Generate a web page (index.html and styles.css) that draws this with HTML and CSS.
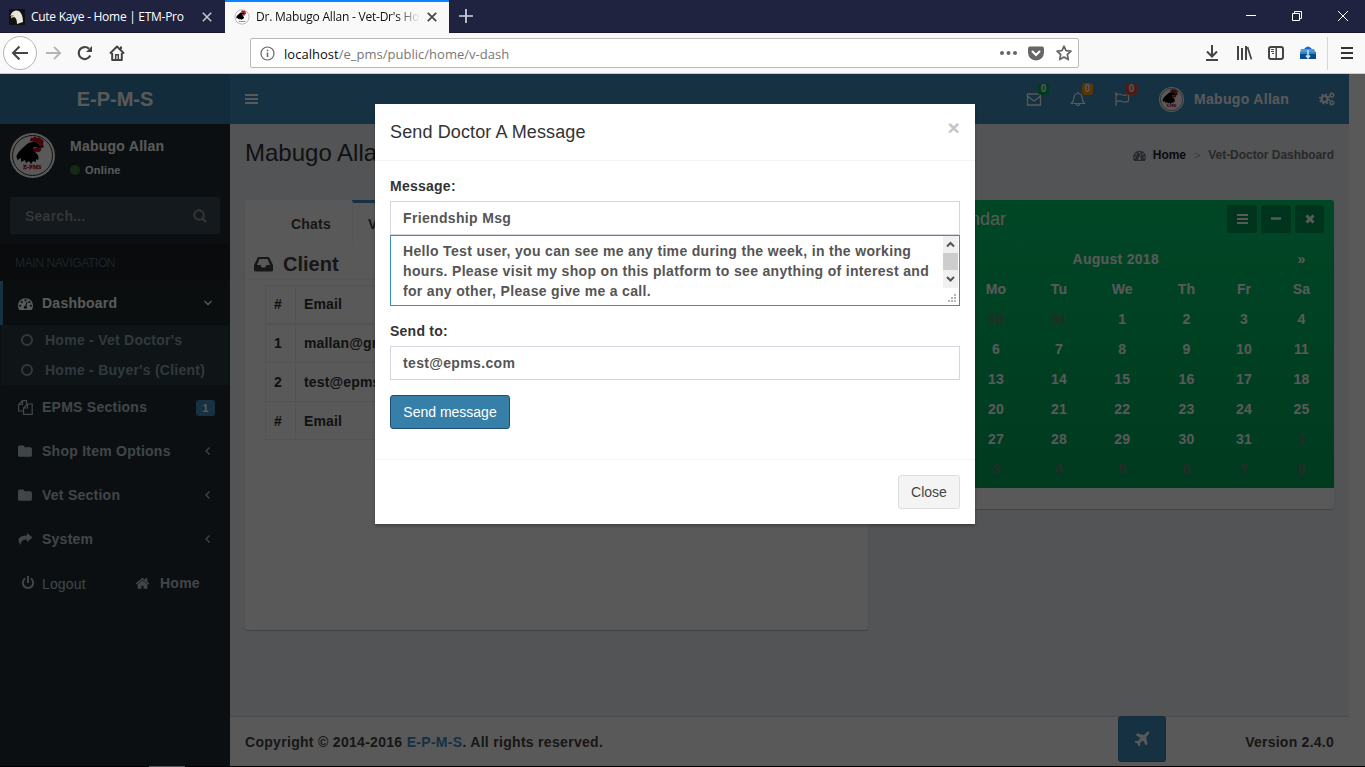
FILE: index.html
```html
<!DOCTYPE html>
<html lang="en">
<head>
<meta charset="utf-8">
<title>Dr. Mabugo Allan - Vet-Dr's Home</title>
<link rel="stylesheet" href="styles.css">
</head>
<body>
<svg class="defs" width="0" height="0">
  <symbol id="gauge" viewBox="0 0 1792 1792"><path fill="currentColor" d="M384 1152q0-53-37.500-90.500t-90.500-37.500-90.500 37.500-37.500 90.500 37.500 90.500 90.500 37.500 90.500-37.500 37.500-90.500zm192-448q0-53-37.500-90.500t-90.500-37.500-90.500 37.500-37.500 90.500 37.500 90.500 90.500 37.500 90.500-37.500 37.500-90.500zm428 481l101-382q6-26-7.500-48.500t-38.500-29.500-48 6.500-30 39.500l-101 382q-60 5-107 43.500t-63 98.500q-20 77 20 146t117 89 146-20 89-117q16-60-6-117t-72-91zm660-33q0-53-37.500-90.500t-90.500-37.500-90.500 37.500-37.500 90.500 37.500 90.500 90.500 37.500 90.500-37.500 37.500-90.500zm-640-640q0-53-37.500-90.500t-90.500-37.500-90.500 37.500-37.500 90.500 37.500 90.500 90.500 37.500 90.500-37.500 37.500-90.500zm448 192q0-53-37.500-90.500t-90.500-37.500-90.500 37.500-37.500 90.500 37.500 90.500 90.500 37.500 90.500-37.500 37.500-90.500zm320 448q0 261-141 483-19 29-54 29h-1402q-35 0-54-29-141-221-141-483 0-182 71-348t191-286 286-191 348-71 348 71 286 191 191 286 71 348z"/></symbol>
  <symbol id="house" viewBox="0 0 1792 1792"><path fill="currentColor" d="M1472 992v480q0 26-19 45t-45 19h-384v-384h-256v384h-384q-26 0-45-19t-19-45v-480q0-1 .5-3t.5-3l575-474 575 474q1 2 1 6zm223-69l-62 74q-8 9-21 11h-3q-13 0-21-7l-692-577-692 577q-12 8-24 7-13-2-21-11l-62-74q-8-10-7-23.500t11-21.500l719-599q32-26 76-26t76 26l244 204v-195q0-14 9-23t23-9h192q14 0 23 9t9 23v408l219 182q10 8 11 21.500t-7 23.500z"/></symbol>
  <symbol id="search" viewBox="0 0 14 14"><g fill="none" stroke="currentColor" stroke-width="2"><circle cx="6" cy="6" r="4.700"/><path d="M9.500 9.500 13 13" stroke-width="2.300"/></g></symbol>
  <symbol id="folder" viewBox="0 0 14 12"><path fill="currentColor" d="M0 2Q0 .5 1.500.5H4.500Q6 .5 6 2H11.600Q13 2 13 3.500V9.500Q13 11 11.500 11H1.500Q0 11 0 9.500Z"/></symbol>
  <symbol id="menu" viewBox="0 0 14 12"><path stroke="currentColor" stroke-width="2" d="M0 2H13M0 6H13M0 10H13"/></symbol>
  <symbol id="left" viewBox="0 0 8 10"><path fill="none" stroke="currentColor" stroke-width="1.300" d="M5.500 1.500 2 5 5.500 8.500"/></symbol>
  <symbol id="rooster" viewBox="0 0 45 45">
    <circle cx="22.500" cy="22.500" r="22.500" fill="#fff"/><circle cx="22.500" cy="22.500" r="20" fill="none" stroke="#333" stroke-width="1"/>
    <path fill="#c1121f" d="M20 8q0-4 3-3 2-3 4 0 3-2 4 1 4 1 2 5 2 3-1 4l-4-5zM24 15l7 0q1 4-3 4-4 0-5-2z"/>
    <path fill="#000" d="M6 25q1-6 9-12 3-4 9-4 4 0 6 4l4 1-5 1-5-1q-2 2 1 5 5 4 3 8l-2-1 0 3-3-1-2 3-2-3-3 2-1-3-4 2 0-4-4 2 0-3z"/>
    <text x="22.500" y="36" text-anchor="middle" class="crest">E-PMS</text>
  </symbol>
</svg>

<header class="tabstrip">
  <div class="tab tab-idle">
    <svg width="16" height="16"><rect width="16" height="16" fill="#111"/><path fill="#e8e4dc" d="M2 5Q5 0 10 2 14 5 14 13L8 15Q8 9 5 8L2 9Z"/><path fill="#b39a62" d="M1 6 5 6 3 9Z"/></svg>
    <span class="tab-label">Cute Kaye - Home | ETM-Pro</span>
    <svg class="tab-x" width="10" height="10"><path stroke="#c8c8d0" stroke-width="1.500" d="M.8.8 9.200 9.200M9.200.8.8 9.200"/></svg>
  </div>
  <div class="tab tab-active">
    <svg width="16" height="16"><use href="#rooster"/></svg>
    <span class="tab-label fade">Dr. Mabugo Allan - Vet-Dr's Home</span>
    <svg class="tab-x" width="10" height="10"><path stroke="#444" stroke-width="1.700" d="M.8.8 9.200 9.200M9.200.8.8 9.200"/></svg>
  </div>
  <svg class="plus" width="14" height="14"><path stroke="#d5d5df" stroke-width="1.700" d="M7 0V14M0 7H14"/></svg>
  <div class="window-buttons">
    <svg width="10" height="10"><path stroke="#fff" d="M0 4.500H10"/></svg>
    <svg width="10" height="10"><path fill="none" stroke="#fff" d="M.5 2.500H7.500V9.500H.5ZM2.500 2.500V.5H9.500V7.500H7.500"/></svg>
    <svg width="10" height="10"><path stroke="#fff" d="M0 0 10 10M10 0 0 10"/></svg>
  </div>
</header>

<nav class="toolbar">
  <div class="back"><svg width="18" height="16" viewBox="0 0 18 16"><path fill="none" stroke="#444" stroke-width="2" d="M17 8H2M8.500 1.500 2 8 8.500 14.500"/></svg></div>
  <svg class="forward" width="17" height="16" viewBox="0 0 18 16"><path fill="none" stroke="#b5b5b7" stroke-width="2" d="M1 8H16M9.500 1.500 16 8 9.500 14.500"/></svg>
  <svg class="reload" width="16" height="16"><path fill="none" stroke="#444" stroke-width="2.200" d="M13.200 10.500A6 6 0 1 1 12 3.800"/><path fill="#444" d="M15 1V7H9Z"/></svg>
  <svg class="home" width="16" height="16"><path fill="none" stroke="#444" stroke-width="2" stroke-linejoin="round" d="M1 8.500 8 1.500 15 8.500M3.200 8V15H12.800V8M12 4V1.500"/><path fill="none" stroke="#444" stroke-width="1.500" d="M6.700 15V9.700H9.300V15"/></svg>
  <div class="urlbar">
    <svg width="15" height="15"><circle cx="7.500" cy="7.500" r="6.500" fill="none" stroke="#666" stroke-width="1.200"/><path stroke="#666" stroke-width="1.500" d="M7.500 6.500V11M7.500 3.700V5.300"/></svg>
    <span class="url"><b>localhost</b>/e_pms/public/home/v-dash</span>
    <svg class="dots" width="17" height="4"><g fill="#666"><circle cx="2" cy="2" r="2"/><circle cx="8.500" cy="2" r="2"/><circle cx="15" cy="2" r="2"/></g></svg>
    <svg class="pocket" width="16" height="15"><path fill="#666" d="M2 .5H14Q16 .5 16 2.500V6.500Q15.500 14 8 14.500.5 14 0 6.500V2.500Q0 .5 2 .5"/><path fill="none" stroke="#fff" stroke-width="2" stroke-linecap="round" d="M4.500 5.500 8 9 11.500 5.500"/></svg>
    <svg class="star" width="16" height="16"><path fill="none" stroke="#666" stroke-width="1.700" stroke-linejoin="round" d="M8 1.200 10 5.700 15 6.200 11.300 9.500 12.300 14.600 8 12 3.700 14.600 4.700 9.500 1 6.200 6 5.700Z"/></svg>
  </div>
  <div class="tools">
    <svg width="14" height="16"><path fill="none" stroke="#444" stroke-width="2" d="M7 0V11M2 6.500 7 11.500 12 6.500M1 15H13"/></svg>
    <svg width="16" height="16"><path stroke="#444" stroke-width="2" d="M2 1V15M6 3V15M10 1V15" /><path stroke="#444" stroke-width="1.700" d="M11.500 2 15.500 14.500"/></svg>
    <svg width="16" height="14"><rect x="1" y="1" width="14" height="12" rx="2" fill="none" stroke="#444" stroke-width="2"/><path stroke="#444" stroke-width="1.500" d="M8.200 1V13"/><path stroke="#444" d="M3 3.500H6M3 5.500H6M4 7.500H6"/></svg>
    <svg width="16" height="16"><path fill="#4a9bd8" d="M1 4H14L16 8H0Z"/><path fill="#1b62d8" d="M4 4Q8-1 12 4Z"/><path fill="#0c4a86" d="M0 7H16V14H0Z"/><path fill="#2f86c6" d="M0 7H16V9H0Z"/><path fill="none" stroke="#bfe2fa" stroke-width="1.600" d="M8 5V13M6 10.500 8 13 10 10.500"/></svg>
    <i class="rule"></i>
    <svg width="12" height="12"><path stroke="#333" stroke-width="2" d="M0 1H12M0 6H12M0 11H12"/></svg>
  </div>
</nav>

<div class="viewport">
  <div class="app">
    <header class="topbar">
      <div class="brand">E-P-M-S</div>
      <div class="topnav">
        <svg class="burger" width="14" height="12"><use href="#menu"/></svg>
        <div class="alerts">
          <div class="alert"><svg width="16" height="16" viewBox="0 0 16 16"><path fill="none" stroke="#fff" stroke-width="1.300" d="M1.500 3H14.500V14H1.500ZM1.500 5Q5 8 8 10 11 8 14.500 5"/></svg><b class="count green">0</b></div>
          <div class="alert"><svg width="16" height="16" viewBox="0 0 16 16"><path fill="none" stroke="#fff" stroke-width="1.200" d="M1.500 12.500Q4 10 4 6 4.500 2.500 8 2.500 11.500 2.500 12 6 12 10 14.500 12.500ZM6 13Q8 16.500 10 13M8 1V3"/></svg><b class="count orange">0</b></div>
          <div class="alert"><svg width="16" height="16" viewBox="0 0 16 16"><path fill="none" stroke="#fff" stroke-width="1.200" d="M2 2V15M2.500 4Q5 2 8.500 4 11 5 14.500 3V10Q11 12 8.500 10.500 5 9 2.500 11M.8 2H3"/></svg><b class="count red">0</b></div>
        </div>
        <svg class="me" width="25" height="25"><use href="#rooster"/></svg>
        <span class="me-name">Mabugo Allan</span>
        <svg class="cogs" width="16" height="14" viewBox="0 0 16 14"><g fill="none" stroke="#fff"><circle cx="5.500" cy="7" r="3" stroke-width="2.200"/><circle cx="5.500" cy="7" r="4.700" stroke-width="1.700" stroke-dasharray="1.850 1.850"/><circle cx="12.800" cy="3.200" r="1.700" stroke-width="1.400"/><circle cx="12.800" cy="3.200" r="2.600" stroke-dasharray="1 1"/><circle cx="12.800" cy="10.800" r="1.700" stroke-width="1.400"/><circle cx="12.800" cy="10.800" r="2.600" stroke-dasharray="1 1"/></g></svg>
      </div>
    </header>
    <div class="columns">
      <aside class="sidebar">
        <div class="user">
          <svg width="45" height="45"><use href="#rooster"/></svg>
          <div><p class="user-name">Mabugo Allan</p><p class="status"><i></i>Online</p></div>
        </div>
        <div class="search"><span>Search...</span><svg width="14" height="14"><use href="#search"/></svg></div>
        <div class="nav-title">MAIN NAVIGATION</div>
        <div class="item current"><svg width="15" height="15"><use href="#gauge"/></svg><span>Dashboard</span><svg class="chev" width="10" height="8"><path fill="none" stroke="#fff" stroke-width="1.300" d="M1.500 2 5 5.500 8.500 2"/></svg></div>
        <div class="submenu">
          <div class="subitem"><i></i>Home - Vet Doctor's</div>
          <div class="subitem"><i></i>Home - Buyer's (Client)</div>
        </div>
        <div class="item"><svg width="15" height="15" viewBox="0 0 15 15"><path fill="none" stroke="currentColor" stroke-width="1.200" d="M5.500 11H.6V4.500L4.500.6H8.500V4M4.500.6V4.500H.6M5.500 8 9.500 4H14.200V14.400H5.500ZM9.500 4V8H5.500"/></svg><span>EPMS Sections</span><b class="badge">1</b></div>
        <div class="item"><svg width="15" height="13"><use href="#folder"/></svg><span>Shop Item Options</span><svg class="chev" width="8" height="10"><use href="#left"/></svg></div>
        <div class="item"><svg width="15" height="13"><use href="#folder"/></svg><span>Vet Section</span><svg class="chev" width="8" height="10"><use href="#left"/></svg></div>
        <div class="item"><svg width="15" height="14"><path fill="currentColor" d="M9 1 14.500 5.500 9 10V7.500Q3 7 2.500 13 0 10 .5 7 2 3.500 9 3.500Z"/></svg><span>System</span><svg class="chev" width="8" height="10"><use href="#left"/></svg></div>
        <div class="exits">
          <svg width="14" height="14"><path fill="none" stroke="currentColor" stroke-width="2" d="M4 2.500A5.200 5.200 0 1 0 10 2.500M7 0V7"/></svg><span class="logout">Logout</span>
          <svg width="15" height="15"><use href="#house"/></svg><b>Home</b>
        </div>
      </aside>
      <main class="main">
        <div class="content">
          <div class="page-head">
            <h1>Mabugo Allan</h1>
            <div class="crumbs"><svg width="13" height="13"><use href="#gauge"/></svg><b class="crumb-home">Home</b><span class="sep">&gt;</span><b>Vet-Doctor Dashboard</b></div>
          </div>
          <div class="cards">
            <section class="card">
              <div class="card-tabs"><span class="chats">Chats</span><span class="vets">Vet</span></div>
              <h2><svg width="19" height="16"><path fill="currentColor" fill-rule="evenodd" d="M4 1H15L19 9V14Q19 15.500 17.500 15.500H1.500Q0 15.500 0 14V9ZM5.500 3 3 9H6.500L7.800 11.500H11.200L12.500 9H16L13.500 3Z"/></svg>Client</h2>
              <table class="clients">
                <thead><tr><th>#</th><th>Email</th></tr></thead>
                <tbody><tr><td>1</td><td>mallan@gmail.com</td></tr><tr><td>2</td><td>test@epms.com</td></tr></tbody>
                <tfoot><tr><th>#</th><th>Email</th></tr></tfoot>
              </table>
            </section>
            <section class="calendar">
              <div class="cal-green">
                <div class="cal-head"><span>Calendar</span>
                  <div class="cal-buttons"><i class="w30"><svg width="11" height="10" viewBox="0 0 11 10"><path stroke="#fff" stroke-width="2" d="M0 1H11M0 5H11M0 9H11"/></svg></i><i class="w30"><svg width="10" height="10"><path stroke="#fff" stroke-width="2.500" d="M0 4.500H10"/></svg></i><i><svg width="10" height="10"><path stroke="#fff" stroke-width="3" d="M1.500 1.500 8.500 8.500M8.500 1.500 1.500 8.500"/></svg></i></div>
                </div>
                <div class="grid">
                  <b>«</b><b class="month">August 2018</b><b>»</b>
                  <b>Su</b><b>Mo</b><b>Tu</b><b>We</b><b>Th</b><b>Fr</b><b>Sa</b>
                  <b class="out">29</b><b class="out">30</b><b class="out">31</b><b>1</b><b>2</b><b>3</b><b>4</b>
                  <b>5</b><b>6</b><b>7</b><b>8</b><b>9</b><b>10</b><b>11</b>
                  <b>12</b><b>13</b><b>14</b><b>15</b><b>16</b><b>17</b><b>18</b>
                  <b>19</b><b>20</b><b>21</b><b>22</b><b>23</b><b>24</b><b>25</b>
                  <b>26</b><b>27</b><b>28</b><b>29</b><b>30</b><b>31</b><b class="out">1</b>
                  <b class="out">2</b><b class="out">3</b><b class="out">4</b><b class="out">5</b><b class="out">6</b><b class="out">7</b><b class="out">8</b>
                </div>
              </div>
            </section>
          </div>
        </div>
        <footer class="footer">
          <span class="copy">Copyright © 2014-2016 <a>E-P-M-S</a>. All rights reserved.</span>
          <div class="plane"><svg width="16" height="16" viewBox="0 0 16 16"><path fill="#fff" d="M15.300.7Q15.500 2.500 14.500 3.500L12 6 13.500 13 12 14.500 9 9.500 6 12 6.300 14.500 5 15.500 3.500 12.500.5 11 1.500 9.700 4 10 6.500 7 1.500 4 3 2.500 10 4 12.500 1.500Q14 .3 15.300.7"/></svg></div>
          <b class="version">Version 2.4.0</b>
        </footer>
      </main>
    </div>
  </div>
  <div class="backdrop"></div>
  <div class="modal">
    <div class="modal-head"><span>Send Doctor A Message</span><b>×</b></div>
    <div class="modal-body">
      <label>Message:</label>
      <div class="field">Friendship Msg</div>
      <div class="field area">
        <div class="area-text">Hello Test user, you can see me any time during the week, in the working<br>hours. Please visit my shop on this platform to see anything of interest and<br>for any other, Please give me a call.</div>
        <div class="area-side">
          <div class="scroll"><svg width="15" height="17"><path fill="none" stroke="#555" stroke-width="2" d="M4 10.500 7.500 7 11 10.500"/></svg><i></i><svg width="15" height="17"><path fill="none" stroke="#555" stroke-width="2" d="M4 7 7.500 10.500 11 7"/></svg></div>
          <svg width="15" height="16"><path fill="#b5b5b5" d="M11 6h2v2h-2zM11 9h2v2h-2zM8 9h2v2H8zM11 12h2v2h-2zM8 12h2v2H8zM5 12h2v2H5z"/></svg>
        </div>
      </div>
      <label class="to">Send to:</label>
      <div class="field">test@epms.com</div>
      <div class="send">Send message</div>
    </div>
    <div class="modal-foot"><div class="close">Close</div></div>
  </div>
</div>
<div class="taskbar"><i></i></div>
</body>
</html>
```

FILE: styles.css
```css
* { box-sizing: border-box; }
body { margin: 0; width: 1365px; height: 767px; overflow: hidden; display: flex; flex-direction: column; font: 14px/20px "Liberation Sans", Arial, sans-serif; color: #333; }
svg { display: block; flex: none; }
.defs { position: absolute; }
p, h1, h2 { margin: 0; }
i { display: block; font-style: normal; }
.crest { font: bold 5.500px "Liberation Serif", serif; fill: #c1121f; stroke: #c1121f; stroke-width: .3px; }

/* Browser window */
.tabstrip { height: 33px; flex: none; display: flex; align-items: center; background: #202340; border-bottom: 1px solid #15172c; font: 12px/16px "Open Sans", sans-serif; }
.tab { height: 33px; display: flex; align-items: center; padding-left: 9px; }
.tab-idle { width: 225px; color: #fff; padding-top: 2px; }
.tab-active { width: 224px; background: #f9f9fa; border-top: 2px solid #0a84ff; color: #111; }
.tab-label { width: 164px; margin-left: 6px; white-space: nowrap; overflow: hidden; letter-spacing: -.28px; }
.tab-idle .tab-x { margin-left: 7px; }
.tab-active .tab-x { margin-left: 7px; }
.fade { letter-spacing: -.22px; -webkit-mask-image: linear-gradient(90deg, #000 86%, transparent); mask-image: linear-gradient(90deg, #000 86%, transparent); }
.plus { margin-left: 10px; }
.window-buttons { margin-left: auto; display: flex; gap: 36px; padding-right: 17px; }
.toolbar { height: 41px; flex: none; display: flex; align-items: center; background: #f9f9fa; border-bottom: 1px solid #ccc; padding-left: 3px; }
.back { width: 34px; height: 34px; border: 1px solid #b5b5b5; border-radius: 50%; background: #fff; display: flex; align-items: center; justify-content: center; }
.forward { margin-left: 8px; }
.reload { margin-left: 15px; }
.home { margin-left: 16px; }
.urlbar { width: 829px; height: 30px; margin-left: 125px; background: #fff; border: 1px solid #bbb; border-radius: 2px; display: flex; align-items: center; padding-left: 9px; font: 13px/18px "Open Sans", sans-serif; color: #777; }
.url { margin-left: 9px; width: 716px; padding-top: 2px; letter-spacing: .02px; }
.url b { font-weight: 400; color: #0c0c0d; }
.pocket { margin-left: 11px; }
.star { margin-left: 12px; }
.tools { display: flex; align-items: center; margin-left: 126px; }
.tools svg + svg { margin-left: 16px; }
.tools svg:nth-child(2) { margin-left: 17px; }
.rule { width: 1px; height: 33px; background: #d5d5d7; margin-left: 11px; }
.rule + svg { margin-left: 13px; }

/* Dashboard */
.viewport { position: relative; height: 692px; flex: none; background: #fff; overflow: hidden; }
.app { width: 1349px; height: 692px; display: flex; flex-direction: column; }
.topbar { height: 50px; display: flex; flex: none; }
.brand { width: 230px; background: #367fa9; color: #fff; font: bold 20px/50px "Liberation Sans", sans-serif; text-align: center; }
.topnav { flex: 1; background: #3c8dbc; color: #fff; display: flex; align-items: center; padding-left: 15px; }
.alerts { display: flex; margin-left: 767px; }
.alert { position: relative; width: 44px; }
.count { position: absolute; left: 12px; top: -8px; width: 11px; height: 12px; border-radius: 3px; font: bold 10px/12px "Liberation Sans", sans-serif; text-align: center; }
.green { background: #00a65a; }
.orange { background: #f39c12; }
.red { background: #dd4b39; }
.me { margin-left: 1px; }
.me-name { margin-left: 10px; width: 125px; font-weight: 700; letter-spacing: .32px; }
.columns { flex: 1; display: flex; }
.sidebar { width: 230px; background: #222d32; color: #b8c7ce; font-weight: 700; letter-spacing: .25px; }
.user { height: 73px; display: flex; padding: 9px 10px; color: #fff; }
.user div { padding: 3px 0 0 15px; }
.status { display: flex; align-items: center; font-size: 11px; margin-top: 4px; }
.status i { width: 10px; height: 10px; border-radius: 50%; background: #3c763d; margin-right: 5px; }
.search { height: 37px; margin: 0 10px 10px; border-radius: 3px; background: #374850; color: #999; display: flex; align-items: center; justify-content: space-between; padding: 0 13px 0 15px; }
.nav-title { height: 37px; background: #1a2226; color: #4b646f; font: 12px/38px "Liberation Sans", sans-serif; letter-spacing: -.36px; padding-left: 15px; }
.item { height: 44px; display: flex; align-items: center; padding-left: 18px; }
.item span { margin-left: 9px; }
.chev { margin-left: auto; margin-right: 18px; }
.current { background: #1e282c; color: #fff; border-left: 3px solid #3c8dbc; padding-left: 15px; }
.current .chev { margin-right: 17px; }
.submenu { background: #2c3b41; margin: 0 1px; color: #8aa4af; height: 60px; }
.subitem { height: 30px; display: flex; align-items: center; padding-left: 20px; letter-spacing: .26px; }
.subitem i { width: 12px; height: 12px; border: 2px solid; border-radius: 50%; margin-right: 12px; }
.badge { margin-left: auto; margin-right: 15px; width: 19px; height: 16px; margin-top: 2px; border-radius: 3px; background: #3c8dbc; color: #fff; font-size: 10.500px; line-height: 16px; text-align: center; }
.exits { height: 44px; display: flex; align-items: center; padding-left: 21px; }
.logout { width: 93px; margin-left: 7px; padding-top: 1px; font-weight: 400; letter-spacing: .15px; }
.exits b { margin-left: 10px; }
.main { flex: 1; display: flex; flex-direction: column; background: #ecf0f5; }
.content { flex: 1; padding: 0 15px; }
.page-head { height: 76px; display: flex; justify-content: space-between; }
h1 { font: 24px/30px "Liberation Sans", sans-serif; padding-top: 14px; }
.crumbs { display: flex; align-items: center; height: 20px; margin-top: 21px; font-size: 12px; letter-spacing: -.05px; color: #777; }
.crumb-home { color: #222; margin-left: 7px; }
.sep { color: #aaa; margin: 0 8px; font-size: 11px; }
.cards { display: flex; gap: 30px; }
.card { width: 623px; height: 430px; background: #fff; border-radius: 3px; box-shadow: 0 1px 1px rgba(0,0,0,.2); font-weight: 700; }
.card-tabs { height: 44px; display: flex; line-height: 48px; color: #444; }
.chats { width: 107px; padding-left: 46px; letter-spacing: .2px; }
.vets { height: 44px; border-top: 3px solid #3c8dbc; border-left: 1px solid #f4f4f4; padding: 0 15px; line-height: 42px; }
h2 { height: 36px; display: flex; align-items: center; padding: 4px 0 0 9px; border-bottom: 1px solid #f4f4f4; font: bold 20px/22px "Liberation Sans", sans-serif; color: #444; }
h2 svg { margin-right: 10px; }
.clients { width: 583px; margin: 5px 0 0 20px; border-collapse: collapse; table-layout: fixed; }
.clients th, .clients td { border: 1px solid #eee; padding: 0 8px; height: 39px; text-align: left; letter-spacing: .15px; }
.clients th:first-child { width: 30px; }
.clients thead th { height: 38px; border-bottom-width: 2px; }
.clients tfoot th { height: 38px; }
.calendar { width: 436px; height: 309px; background: #fff; border-radius: 3px; box-shadow: 0 1px 1px rgba(0,0,0,.2); color: #fff; }
.cal-green { height: 288px; border-radius: 3px 3px 0 0; background: linear-gradient(#00ca6d, #00a65a); padding-top: 5px; }
.cal-head { display: flex; justify-content: space-between; height: 39px; padding: 0 10px 0 35px; font-size: 18px; line-height: 28px; }
.cal-buttons { display: flex; gap: 4px; }
.cal-buttons i { width: 29px; height: 28px; border-radius: 3px; background: #009551; display: flex; align-items: center; justify-content: center; }
.cal-buttons .w30 { width: 30px; }
.grid { display: grid; grid-template-columns: 61.500px 63px 63px 63.500px 65px 50px 65px; grid-auto-rows: 30px; line-height: 30px; text-align: center; padding-left: 5px; }
.grid b { letter-spacing: .1px; }
.grid .month { grid-column: span 5; padding-right: 2px; letter-spacing: .3px; }
.out { color: #777; }
.footer { height: 50px; flex: none; background: #fff; border-top: 1px solid #d2d6de; display: flex; padding: 0 15px; line-height: 51px; color: #444; font-weight: 700; }
.copy { width: 873px; letter-spacing: .3px; }
.footer a { color: #3c8dbc; }
.plane { width: 48px; height: 46px; margin-top: -1px; border-radius: 3px; background: #3c8dbc; border: 1px solid #367fa9; display: flex; align-items: center; justify-content: center; }
.version { margin-left: auto; letter-spacing: .25px; }

/* Message dialog */
.backdrop { position: absolute; inset: 0; background: rgba(0,0,0,.65); }
.modal { position: absolute; left: 375px; top: 30px; width: 600px; height: 420px; background: #fff; box-shadow: 0 2px 3px rgba(0,0,0,.25); display: flex; flex-direction: column; }
.modal-head { height: 57px; border-bottom: 1px solid #f4f4f4; display: flex; justify-content: space-between; padding: 15px 15px 0; font-size: 18px; line-height: 26px; letter-spacing: .12px; }
.modal-head b { font-size: 21px; line-height: 17px; color: #c4c4c4; }
.modal-body { flex: 1; padding: 15px; }
label { display: block; font-weight: 700; height: 25px; letter-spacing: .25px; }
.field { height: 34px; border: 1px solid #d2d6de; padding: 0 12px; line-height: 32px; font-weight: 700; color: #555; letter-spacing: .34px; }
.area { height: 71px; border-color: #3c8dbc; padding: 0 1px 0 12px; line-height: 20px; display: flex; justify-content: space-between; }
.area-text { padding-top: 5px; white-space: nowrap; letter-spacing: .33px; }
.scroll { background: #f0f0f0; height: 52px; width: 15px; }
.scroll i { height: 17px; background: #cdcdcd; }
.to { margin-top: 15px; }
.send { margin-top: 15px; width: 120px; height: 34px; border: 1px solid #204d74; border-radius: 3px; background: #367fa9; color: #fff; text-align: center; line-height: 32px; }
.modal-foot { height: 65px; border-top: 1px solid #f4f4f4; padding: 15px; display: flex; justify-content: flex-end; }
.close { width: 62px; height: 34px; border: 1px solid #ddd; border-radius: 3px; background: #f4f4f4; color: #444; text-align: center; line-height: 32px; }
.taskbar { height: 1px; background: #000; flex: none; }
.taskbar i { width: 36px; height: 1px; margin-left: 149px; background: #555; }
```
